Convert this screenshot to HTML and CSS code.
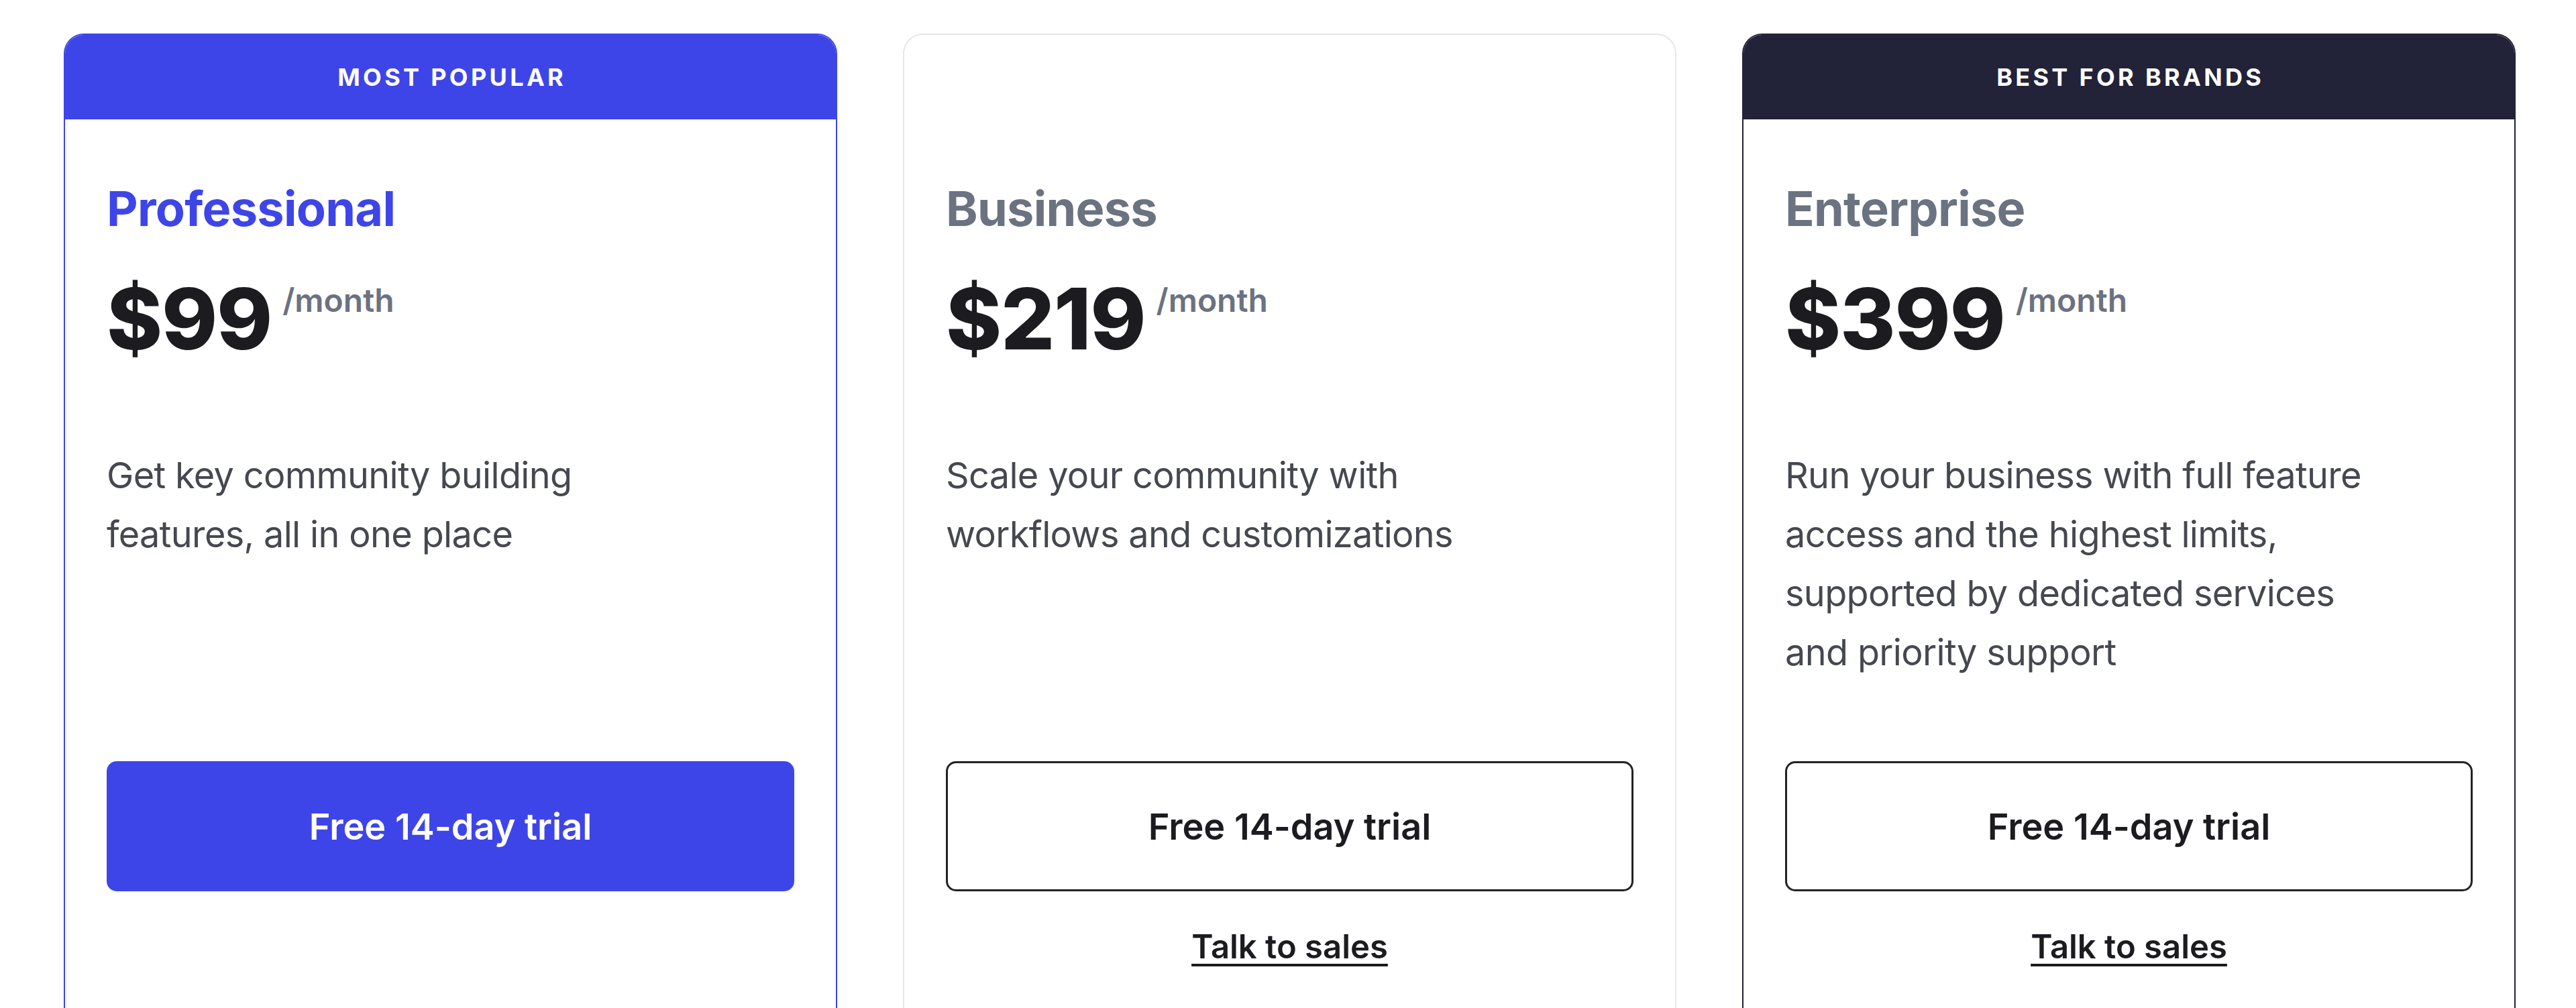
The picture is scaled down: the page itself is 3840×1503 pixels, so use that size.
FILE: index.html
```html
<!DOCTYPE html>
<html lang="en">
<head>
<meta charset="utf-8">
<title>Pricing</title>
<link rel="stylesheet" href="styles.css">
</head>
<body>
<main class="plans">
  <article class="plan plan--popular">
    <div class="plan-badge">Most popular</div>
    <div class="plan-body">
      <h3 class="plan-name">Professional</h3>
      <div class="plan-price"><span class="amount">$99</span><span class="period">/month</span></div>
      <p class="plan-desc">Get key community building<br>features, all in one place</p>
      <a class="btn btn--primary" href="#">Free 14-day trial</a>
    </div>
  </article>

  <article class="plan">
    <div class="plan-badge plan-badge--empty"></div>
    <div class="plan-body">
      <h3 class="plan-name">Business</h3>
      <div class="plan-price"><span class="amount">$219</span><span class="period">/month</span></div>
      <p class="plan-desc">Scale your community with<br>workflows and customizations</p>
      <a class="btn btn--outline" href="#">Free 14-day trial</a>
      <a class="sales-link" href="#">Talk to sales</a>
    </div>
  </article>

  <article class="plan plan--brands">
    <div class="plan-badge">Best for brands</div>
    <div class="plan-body">
      <h3 class="plan-name">Enterprise</h3>
      <div class="plan-price"><span class="amount">$399</span><span class="period">/month</span></div>
      <p class="plan-desc">Run your business with full feature<br>access and the highest limits,<br>supported by dedicated services<br>and priority support</p>
      <a class="btn btn--outline" href="#">Free 14-day trial</a>
      <a class="sales-link" href="#">Talk to sales</a>
    </div>
  </article>
</main>
</body>
</html>
```

FILE: styles.css
```css
html, body {
  margin: 0;
  padding: 0;
  background: #ffffff;
  overflow: hidden;
}

body {
  font-family: Inter, "Noto Sans", "Liberation Sans", sans-serif;
  color: #1b1b20;
}

.plans {
  display: grid;
  grid-template-columns: repeat(3, 1153px);
  column-gap: 98px;
  padding: 50px 0 0 95px;
}

.plan {
  display: flex;
  flex-direction: column;
  min-height: 1700px;
  border: 2px solid #e5e7eb;
  border-radius: 30px;
  overflow: hidden;
  background: #ffffff;
}

.plan--popular {
  border-color: #3e45e8;
}

.plan--brands {
  border-color: #222238;
}

.plan-badge {
  height: 126px;
  display: flex;
  align-items: center;
  justify-content: center;
  padding-left: 0.12em;
  font-size: 36px;
  font-weight: 700;
  letter-spacing: 0.12em;
  text-transform: uppercase;
  color: #ffffff;
}

.plan--popular .plan-badge {
  background: #3e45e8;
}

.plan--brands .plan-badge {
  background: #222238;
}

.plan-body {
  display: flex;
  flex-direction: column;
  padding: 89px 62px 0;
}

.plan-name {
  margin: 0;
  font-size: 72px;
  line-height: 88px;
  font-weight: 700;
  letter-spacing: -0.01em;
  color: #6b7280;
}

.plan--popular .plan-name {
  color: #3e45e8;
}

.plan-price {
  display: flex;
  align-items: flex-start;
  gap: 16px;
  margin-top: 58px;
}

.amount {
  font-size: 126px;
  line-height: 124px;
  font-weight: 800;
  letter-spacing: -0.01em;
  color: #1b1b20;
}

.period {
  font-size: 48px;
  line-height: 69px;
  font-weight: 600;
  color: #6b7280;
}

.plan-desc {
  margin: 128px 0 0;
  min-height: 352px;
  font-size: 54px;
  line-height: 88px;
  letter-spacing: -0.012em;
  color: #45484f;
}

.btn {
  display: flex;
  align-items: center;
  justify-content: center;
  box-sizing: border-box;
  height: 194px;
  margin-top: 118px;
  border-radius: 15px;
  font-size: 54px;
  font-weight: 600;
  text-decoration: none;
}

.btn--primary {
  background: #3e45e8;
  color: #ffffff;
}

.btn--outline {
  border: 3px solid #222226;
  color: #1b1b20;
  background: #ffffff;
}

.sales-link {
  align-self: center;
  margin-top: 48px;
  font-size: 49px;
  line-height: 69px;
  font-weight: 600;
  color: #1b1b20;
  text-decoration: underline;
  text-decoration-thickness: 4px;
  text-underline-offset: 8px;
}
```
